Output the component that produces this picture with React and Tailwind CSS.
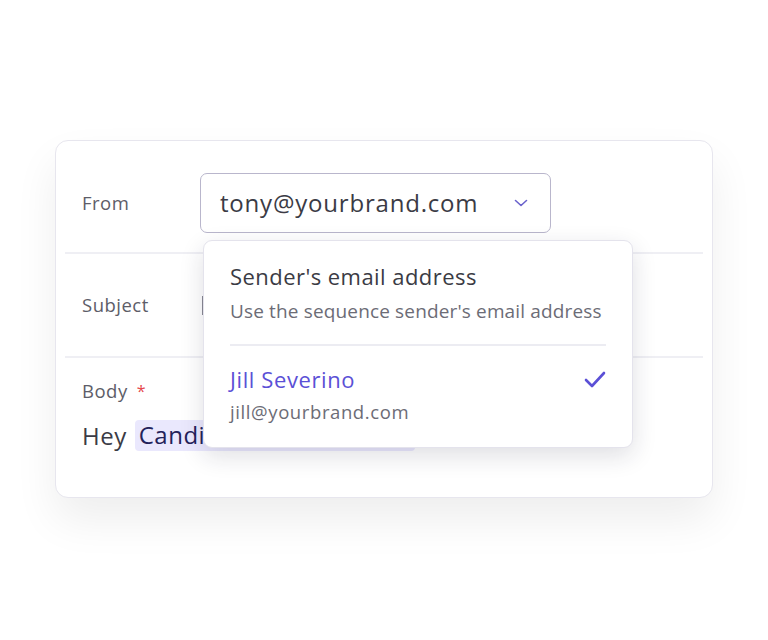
import { useState } from 'react';

const FONT = { fontFamily: '"Open Sans", "Noto Sans", sans-serif' };

function Chevron() {
  return (
    <svg width="14" height="8" viewBox="0 0 14 8" fill="none" className="shrink-0">
      <path d="M1.5 1.5L7 6.5L12.5 1.5" stroke="#6a62cc" strokeWidth="1.6" strokeLinecap="round" strokeLinejoin="round" />
    </svg>
  );
}

function Check() {
  return (
    <svg width="22" height="17" viewBox="0 0 22 17" fill="none" className="shrink-0">
      <path d="M2 9L8 15L20 2" stroke="#5b50d6" strokeWidth="2.6" strokeLinecap="round" strokeLinejoin="round" />
    </svg>
  );
}

function SenderMenu() {
  return (
    <div className="absolute left-[3px] top-[67px] w-[430px] bg-white border border-[#e4e3ec] rounded-[9px] shadow-[0_8px_24px_rgba(30,30,60,0.14)] px-[26px] pt-[21px] pb-[23px] z-10">
      <div className="text-[22px] leading-[28px] font-medium tracking-[0.45px] text-[#3b3b44] whitespace-nowrap">Sender's email address</div>
      <div className="mt-[8px] text-[19px] leading-[26px] tracking-[0.15px] text-[#6c6c76] whitespace-nowrap">Use the sequence sender's email address</div>
      <div className="mt-[20px] border-t-2 border-[#ececf2]" />
      <div className="mt-[19px] flex items-center justify-between">
        <span className="text-[22px] leading-[28px] font-medium tracking-[0.6px] text-[#5b50d6]">Jill Severino</span>
        <Check />
      </div>
      <div className="mt-[7px] text-[18.5px] leading-[24px] tracking-[0.6px] text-[#6c6c76]">jill@yourbrand.com</div>
    </div>
  );
}

export default function App() {
  const [from] = useState('tony@yourbrand.com');

  return (
    <div className="w-[768px] h-[640px] bg-white overflow-hidden pt-[140px] pl-[55px]" style={FONT}>
      <div className="w-[658px] h-[358px] bg-white border border-[#e7e6ee] rounded-[13px] shadow-[0_22px_44px_rgba(0,0,0,0.07)] px-[9px]">
        {/* From */}
        <div className="flex items-center px-[17px] pt-[32px] pb-[19px] border-b-2 border-[#efeff4]">
          <span className="w-[118px] text-[18.5px] tracking-[0.5px] text-[#5d5d68]">From</span>
          <div className="relative">
            <div className="w-[351px] h-[60px] flex items-center justify-between pl-[19px] pr-[22px] border-[1.5px] border-[#b9b6cc] rounded-[7px]">
              <span className="text-[24px] tracking-[0.8px] text-[#3b3b45]">{from}</span>
              <Chevron />
            </div>
            <SenderMenu />
          </div>
        </div>

        {/* Subject */}
        <div className="flex items-center h-[104px] px-[17px] border-b-2 border-[#efeff4]">
          <span className="w-[118px] text-[18.5px] tracking-[0.5px] text-[#5d5d68]">Subject</span>
          <span className="ml-[2px] w-[2px] h-[19px] bg-[#8a8a94]" />
        </div>

        {/* Body */}
        <div className="px-[17px] pt-[21px]">
          <div className="flex items-start gap-[9px] text-[18.5px] leading-[24px] tracking-[0.5px] text-[#5d5d68]">
            <span>Body</span>
            <span className="text-[#e5484d] text-[16px]">*</span>
          </div>
          <div className="mt-[17px] flex items-center text-[24px] leading-[30px] tracking-[0.5px] text-[#3b3b45]">
            <span>Hey</span>
            <span className="ml-[8px] w-[280px] h-[31px] rounded-[4px] bg-[#eae8fd] pl-[4px] text-[#23225a] whitespace-nowrap">Candidate name</span>
          </div>
        </div>
      </div>
    </div>
  );
}
